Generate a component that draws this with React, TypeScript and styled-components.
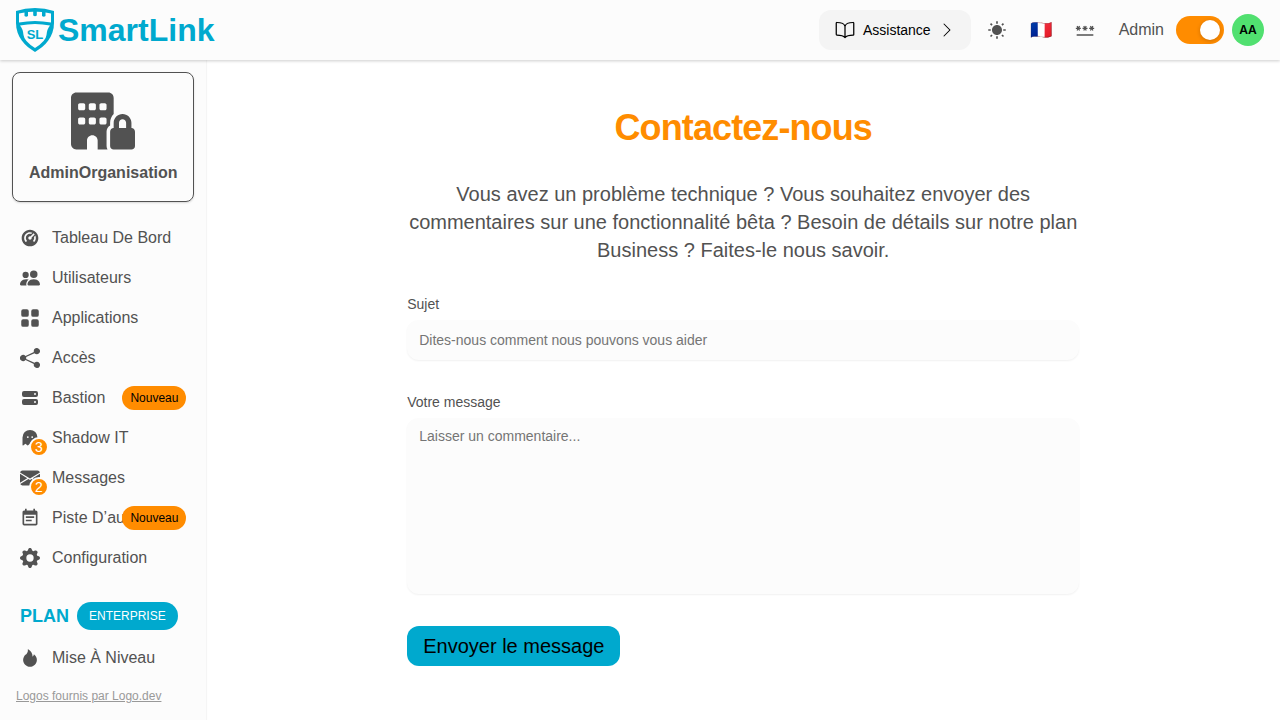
import React from "react";
import styled, { createGlobalStyle } from "styled-components";
import { AiFillFire } from "react-icons/ai";
import { FaBuildingLock } from "react-icons/fa6";
import { RiDashboard2Fill } from "react-icons/ri";
import { IoBookOutline } from "react-icons/io5";
import { IoMdSunny } from "react-icons/io";
import {
  BsChevronRight,
  BsEnvelopeFill,
  BsGearFill,
  BsGridFill,
  BsPeopleFill,
  BsShareFill,
} from "react-icons/bs";
import { HiServer } from "react-icons/hi";
import { PiGhostFill } from "react-icons/pi";
import { MdEventNote, MdPassword } from "react-icons/md";

const cyan = "#00a9ce";
const orange = "#ff8c00";
const ink = "#525252";
const surface = "#fcfcfc";

const GlobalStyle = createGlobalStyle`
  *, *::before, *::after { box-sizing: border-box; }
  body {
    margin: 0;
    background: #fff;
    color: ${ink};
    font-family: "Liberation Sans", Arial, sans-serif;
    font-size: 16px;
    line-height: 24px;
  }
  button, input, textarea { font: inherit; color: inherit; }
  h1, p, ul { margin: 0; padding: 0; }
  svg { display: block; flex-shrink: 0; }
`;

const Page = styled.div`
  min-height: 100vh;
  display: flex;
  flex-direction: column;
`;

const Header = styled.header`
  position: relative;
  z-index: 1;
  height: 60px;
  padding: 0 16px;
  display: flex;
  align-items: center;
  justify-content: space-between;
  background: ${surface};
  box-shadow: 0 1px 3px rgba(0, 0, 0, 0.2);
`;

const Brand = styled.a`
  display: flex;
  align-items: center;
  gap: 4px;
  color: ${cyan};
  font-size: 32px;
  line-height: 40px;
  font-weight: 700;
  text-decoration: none;
`;

const Actions = styled.div`
  display: flex;
  align-items: center;
  gap: 8px;
`;

const HelpButton = styled.button`
  height: 40px;
  padding: 0 16px;
  display: flex;
  align-items: center;
  gap: 8px;
  border: 0;
  border-radius: 12px;
  background: #f4f4f4;
  color: #000;
  font-size: 14px;
`;

const IconButton = styled.button`
  width: 36px;
  height: 36px;
  padding: 0;
  display: flex;
  align-items: center;
  justify-content: center;
  border: 0;
  background: transparent;
  font-size: 18px;
`;

const AdminToggle = styled.label`
  margin-left: 8px;
  display: flex;
  align-items: center;
  gap: 12px;
`;

const Switch = styled.input`
  appearance: none;
  width: 48px;
  height: 28px;
  margin: 0;
  padding: 4px;
  display: flex;
  border-radius: 14px;
  background: #d4d4d4;

  &::before {
    content: "";
    width: 20px;
    height: 20px;
    border-radius: 50%;
    background: #fff;
    box-shadow: 0 1px 4px rgba(0, 0, 0, 0.2);
  }

  &:checked {
    justify-content: flex-end;
    background: ${orange};
  }
`;

const Avatar = styled.button`
  width: 32px;
  height: 32px;
  padding: 0;
  border: 0;
  border-radius: 50%;
  background: #51e070;
  color: #000;
  font-family: Inter, sans-serif;
  font-size: 12px;
  font-weight: 600;
`;

const Body = styled.div`
  flex: 1;
  display: flex;
`;

const Sidebar = styled.aside`
  flex: 0 0 206px;
  padding: 12px 12px 16px;
  background: ${surface};
  box-shadow: 1px 0 1px rgba(0, 0, 0, 0.04);
`;

const OrgCard = styled.div`
  padding: 16px;
  display: flex;
  flex-direction: column;
  align-items: center;
  gap: 8px;
  border: 1px solid ${ink};
  border-radius: 8px;
  box-shadow: 0 1px 2px rgba(0, 0, 0, 0.15);
  font-weight: 700;
`;

const NavList = styled.ul`
  margin-top: 16px;
  list-style: none;
`;

const NavLink = styled.a`
  position: relative;
  height: 40px;
  padding: 0 8px;
  display: flex;
  align-items: center;
  gap: 12px;
  color: inherit;
  text-decoration: none;
  white-space: nowrap;
`;

const NavIcon = styled.span`
  position: relative;
  flex: 0 0 20px;
`;

const CountBadge = styled.span`
  position: absolute;
  top: 9px;
  left: 9px;
  width: 20px;
  height: 20px;
  border: 2px solid ${surface};
  border-radius: 50%;
  background: ${orange};
  color: #fff;
  font-size: 14px;
  line-height: 16px;
  text-align: center;
`;

const NewBadge = styled.span`
  position: absolute;
  top: 8px;
  right: 8px;
  padding: 0 8px;
  border-radius: 12px;
  background: ${orange};
  color: #000;
  font-size: 12px;
  line-height: 24px;
`;

const PlanRow = styled.div`
  margin: 24px 0 8px;
  padding: 0 8px;
  display: flex;
  align-items: center;
  gap: 8px;
  color: ${cyan};
  font-size: 18px;
  font-weight: 700;
`;

const PlanBadge = styled.span`
  padding: 0 12px;
  border-radius: 14px;
  background: ${cyan};
  color: #fff;
  font-size: 12px;
  line-height: 28px;
  font-weight: 400;
`;

const Credit = styled.a`
  display: block;
  margin: 10px 4px 0;
  color: #999;
  font-size: 12px;
  line-height: 16px;
`;

const Main = styled.main`
  flex: 1;
  padding: 48px 32px;
`;

const Content = styled.div`
  max-width: 672px;
  margin: 0 auto;
`;

const Title = styled.h1`
  color: ${orange};
  font-size: 36px;
  line-height: 40px;
  letter-spacing: -0.025em;
  text-align: center;
`;

const Intro = styled.p`
  margin: 32px 0 28px;
  font-size: 20px;
  line-height: 28px;
  text-align: center;
`;

const Form = styled.form`
  display: flex;
  flex-direction: column;
  align-items: flex-start;
  gap: 30px;
`;

const Field = styled.div`
  width: 100%;
  display: flex;
  flex-direction: column;
  gap: 4px;
  font-size: 14px;
`;

const Input = styled.input`
  height: 40px;
  padding: 0 12px;
  border: 0;
  border-radius: 12px;
  background: ${surface};
  box-shadow: 0 1px 2px rgba(0, 0, 0, 0.06);

  &::placeholder { color: #757575; }
`;

const TextArea = styled.textarea`
  height: 176px;
  padding: 8px 12px;
  border: 0;
  border-radius: 12px;
  background: ${surface};
  box-shadow: 0 1px 2px rgba(0, 0, 0, 0.06);
  line-height: 20px;
  resize: none;

  &::placeholder { color: #757575; }
`;

const Submit = styled.button`
  height: 40px;
  margin-top: 2px;
  padding: 0 16px;
  border: 0;
  border-radius: 12px;
  background: ${cyan};
  color: #000;
  font-size: 20px;
`;

function ShieldLogo() {
  return (
    <svg width="38" height="44" viewBox="0 0 38 44" aria-hidden="true">
      <path
        fill={cyan}
        d="M0 3Q9 0 19 0T38 3V15C38 29 29 38 19 44C9 38 0 29 0 15Z"
      />
      <path
        fill={surface}
        d="M3 5.500L8.500 4.500V8Q10.200 9.600 12 8V4L17.200 3.700V7.500Q19 9 20.800 7.500V3.700L26 4V8Q27.800 9.600 29.500 8V4.500L35 5.500V14.500Q19 11.500 3 14.500Z"
      />
      <path
        fill={surface}
        d="M4 17.500Q19 14.500 34 17.500Q31 21 30.500 27Q30 33 19 40Q8 33 7.500 27Q7 21 4 17.500Z"
      />
      <text
        x="19"
        y="31"
        fill={cyan}
        fontFamily="Liberation Sans, Arial, sans-serif"
        fontSize="13"
        fontWeight="700"
        textAnchor="middle"
      >
        SL
      </text>
    </svg>
  );
}

type NavEntry = {
  label: string;
  icon: React.ComponentType<{ size?: number }>;
  count?: number;
  isNew?: boolean;
};

const entries: NavEntry[] = [
  { label: "Tableau De Bord", icon: RiDashboard2Fill },
  { label: "Utilisateurs", icon: BsPeopleFill },
  { label: "Applications", icon: BsGridFill },
  { label: "Accès", icon: BsShareFill },
  { label: "Bastion", icon: HiServer, isNew: true },
  { label: "Shadow IT", icon: PiGhostFill, count: 3 },
  { label: "Messages", icon: BsEnvelopeFill, count: 2 },
  { label: "Piste D’audit", icon: MdEventNote, isNew: true },
  { label: "Configuration", icon: BsGearFill },
];

function NavItem({ label, icon: Icon, count, isNew }: NavEntry) {
  return (
    <NavLink href="#">
      <NavIcon>
        <Icon size={20} />
        {count !== undefined && <CountBadge>{count}</CountBadge>}
      </NavIcon>
      {label}
      {isNew && <NewBadge>Nouveau</NewBadge>}
    </NavLink>
  );
}

export default function App() {
  return (
    <Page>
      <GlobalStyle />
      <Header>
        <Brand href="#">
          <ShieldLogo />
          SmartLink
        </Brand>
        <Actions>
          <HelpButton type="button">
            <IoBookOutline size={20} />
            Assistance
            <BsChevronRight size={16} />
          </HelpButton>
          <IconButton type="button" aria-label="Thème">
            <IoMdSunny size={20} />
          </IconButton>
          <IconButton type="button" aria-label="Langue">🇫🇷</IconButton>
          <IconButton type="button" aria-label="Mot de passe">
            <MdPassword size={20} />
          </IconButton>
          <AdminToggle>
            Admin
            <Switch type="checkbox" role="switch" defaultChecked />
          </AdminToggle>
          <Avatar type="button">AA</Avatar>
        </Actions>
      </Header>
      <Body>
        <Sidebar>
          <OrgCard>
            <FaBuildingLock size={64} />
            AdminOrganisation
          </OrgCard>
          <nav>
            <NavList>
              {entries.map((entry) => (
                <li key={entry.label}>
                  <NavItem {...entry} />
                </li>
              ))}
            </NavList>
          </nav>
          <PlanRow>
            PLAN
            <PlanBadge>ENTERPRISE</PlanBadge>
          </PlanRow>
          <NavItem label="Mise À Niveau" icon={AiFillFire} />
          <Credit href="#">Logos fournis par Logo.dev</Credit>
        </Sidebar>
        <Main>
          <Content>
            <Title>Contactez-nous</Title>
            <Intro>
              Vous avez un problème technique ? Vous souhaitez envoyer des commentaires sur une
              fonctionnalité bêta ? Besoin de détails sur notre plan Business ? Faites-le nous
              savoir.
            </Intro>
            <Form>
              <Field>
                <label htmlFor="subject">Sujet</label>
                <Input id="subject" placeholder="Dites-nous comment nous pouvons vous aider" />
              </Field>
              <Field>
                <label htmlFor="message">Votre message</label>
                <TextArea id="message" placeholder="Laisser un commentaire..." />
              </Field>
              <Submit type="submit">Envoyer le message</Submit>
            </Form>
          </Content>
        </Main>
      </Body>
    </Page>
  );
}
